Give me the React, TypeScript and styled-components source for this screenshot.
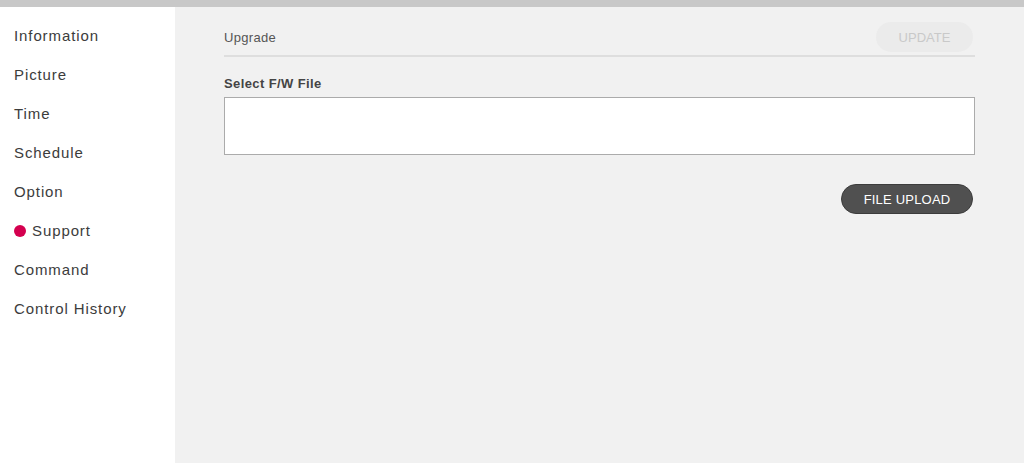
import styled, { createGlobalStyle } from 'styled-components';

const menuItems = [
  'Information',
  'Picture',
  'Time',
  'Schedule',
  'Option',
  'Support',
  'Command',
  'Control History',
];

const App: React.FC = () => {
  const active = 'Support';

  return (
    <>
      <GlobalStyle />
      <Page>
        <TopBar />
        <Body>
          <Sidebar>
            {menuItems.map((item) => (
              <MenuItem key={item} $active={item === active}>
                {item === active && <ActiveDot />}
                {item}
              </MenuItem>
            ))}
          </Sidebar>
          <Main>
            <SectionHeader>
              <SectionTitle>Upgrade</SectionTitle>
              <UpdateButton disabled>UPDATE</UpdateButton>
            </SectionHeader>
            <FieldLabel>Select F/W File</FieldLabel>
            <FileBox />
            <Actions>
              <UploadButton>FILE UPLOAD</UploadButton>
            </Actions>
          </Main>
        </Body>
      </Page>
    </>
  );
};

const GlobalStyle = createGlobalStyle`
  html, body {
    margin: 0;
    padding: 0;
    height: 100%;
  }
  body {
    font-family: "Liberation Sans", Arial, sans-serif;
    background: #f1f1f1;
  }
  #root {
    height: 100%;
  }
`;

const Page = styled.div`
  display: flex;
  flex-direction: column;
  height: 463px;
  overflow: hidden;
`;

const TopBar = styled.div`
  height: 7px;
  background: #c8c8c8;
  flex-shrink: 0;
`;

const Body = styled.div`
  flex: 1;
  display: flex;
`;

const Sidebar = styled.nav`
  width: 175px;
  background: #ffffff;
  padding-top: 9px;
  box-sizing: border-box;
  flex-shrink: 0;
`;

const MenuItem = styled.div<{ $active?: boolean }>`
  display: flex;
  align-items: center;
  gap: 6px;
  height: 39px;
  line-height: 39px;
  padding-left: 14px;
  font-size: 15px;
  letter-spacing: 0.9px;
  color: #3c3c3c;
  cursor: pointer;
`;

const ActiveDot = styled.span`
  width: 12px;
  height: 12px;
  border-radius: 50%;
  background: #d4004f;
  flex-shrink: 0;
`;

const Main = styled.main`
  flex: 1;
  padding: 15px 49px 0 49px;
  background: #f1f1f1;
`;

const SectionHeader = styled.div`
  display: flex;
  align-items: center;
  justify-content: space-between;
  height: 30px;
  padding-bottom: 3px;
  border-bottom: 2px solid #dedede;
`;

const SectionTitle = styled.div`
  font-size: 13px;
  letter-spacing: 0.3px;
  color: #555555;
`;

const UpdateButton = styled.button`
  width: 97px;
  height: 30px;
  margin-right: 2px;
  border: none;
  border-radius: 15px;
  background: #ebebeb;
  color: #c9c9c9;
  font-family: "Liberation Sans", Arial, sans-serif;
  font-size: 13px;
  padding: 0;
`;

const FieldLabel = styled.div`
  margin-top: 19px;
  font-size: 13px;
  line-height: 16px;
  font-weight: bold;
  letter-spacing: 0.4px;
  color: #444444;
`;

const FileBox = styled.div`
  margin-top: 5px;
  height: 56px;
  background: #ffffff;
  border: 1px solid #ababab;
`;

const Actions = styled.div`
  display: flex;
  justify-content: flex-end;
  margin-top: 29px;
`;

const UploadButton = styled.button`
  width: 132px;
  height: 30px;
  margin-right: 2px;
  border: 1px solid #3c3c3c;
  border-radius: 15px;
  background: #505050;
  color: #ffffff;
  font-family: "Liberation Sans", Arial, sans-serif;
  font-size: 13px;
  letter-spacing: 0.2px;
  padding: 0;
  cursor: pointer;
`;

export default App;
